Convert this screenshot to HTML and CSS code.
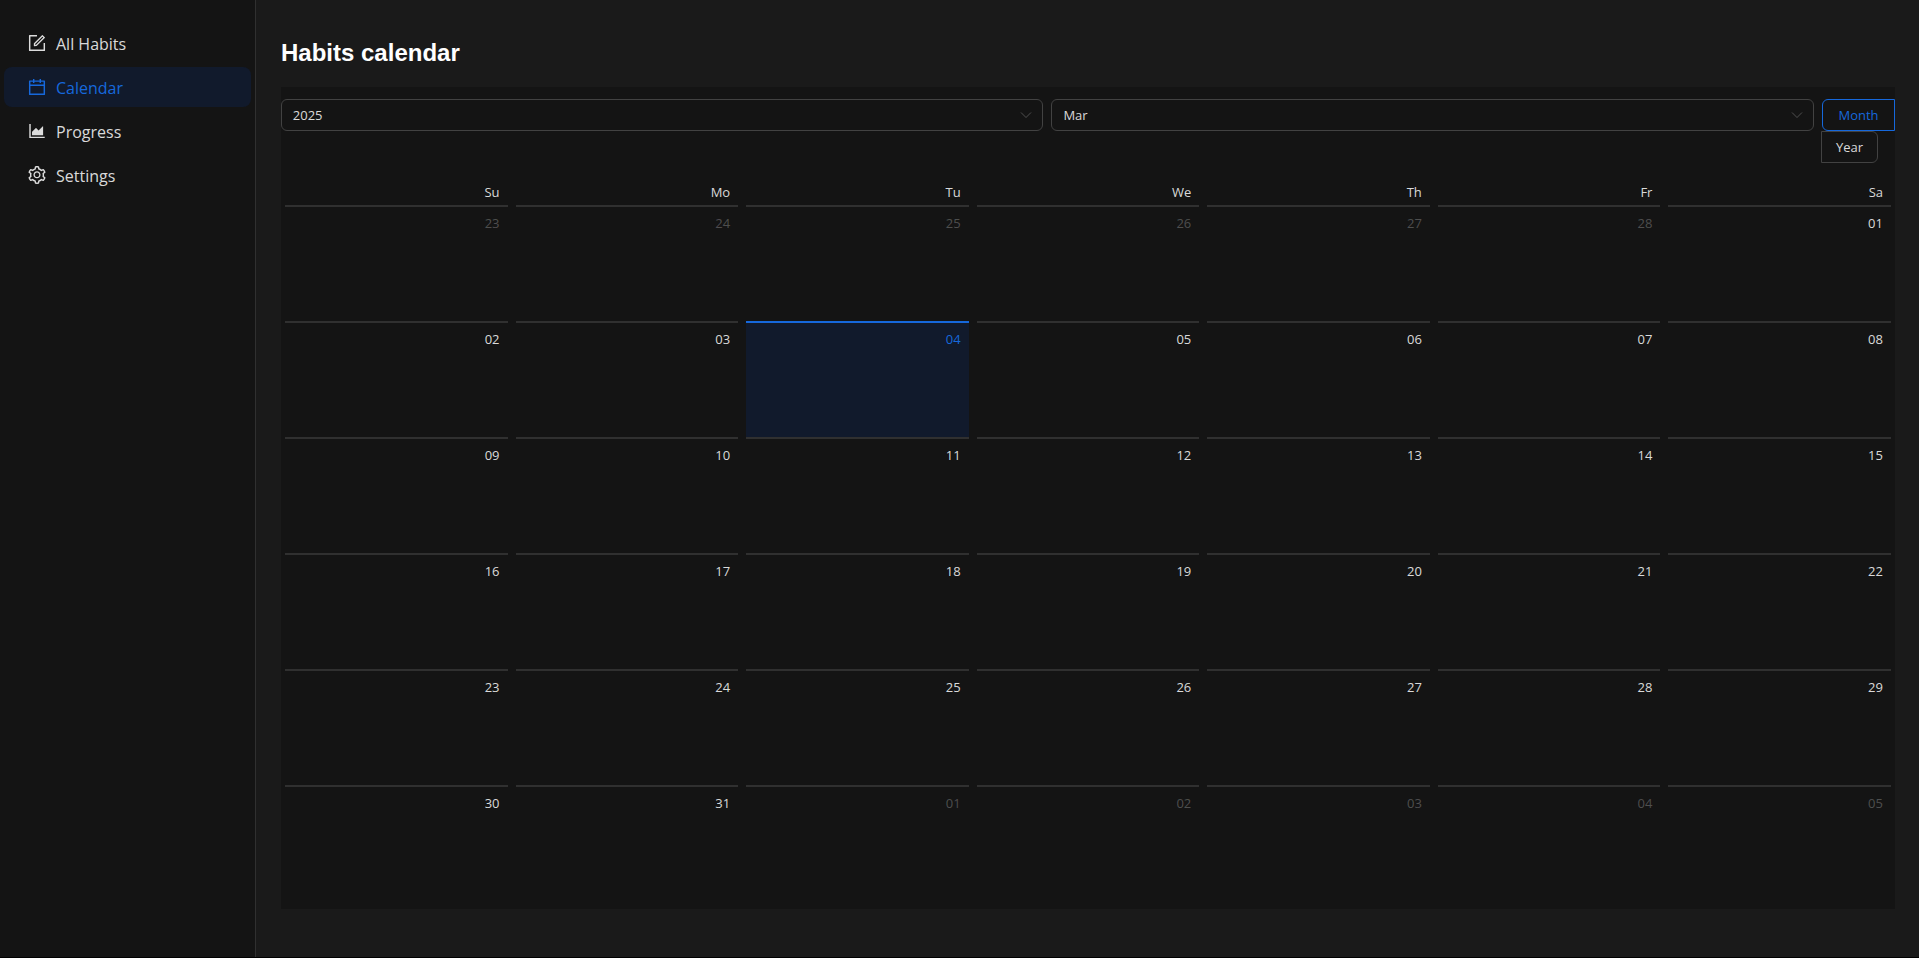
FILE: index.html
```html
<!DOCTYPE html>
<html lang="en">
<head>
<meta charset="utf-8">
<title>Habits calendar</title>
<link rel="stylesheet" href="styles.css">
</head>
<body>
<div class="app">
  <aside class="sidebar">
    <nav class="menu">
      <a class="menu-item"><svg class="menu-icon" viewBox="64 64 896 896" fill="currentColor"><path d="M904 512h-56c-4.400 0-8 3.600-8 8v320H184V184h320c4.400 0 8-3.600 8-8v-56c0-4.400-3.600-8-8-8H144c-17.700 0-32 14.300-32 32v736c0 17.700 14.300 32 32 32h736c17.700 0 32-14.300 32-32V520c0-4.400-3.600-8-8-8z"/><path d="M355.900 534.900L354 653.800c-.1 8.900 7.100 16.200 16 16.200h.4l118-2.900c2-.1 4-.9 5.400-2.300l415.900-415c3.100-3.100 3.100-8.200 0-11.300L785.400 114.300c-1.600-1.600-3.600-2.300-5.700-2.300s-4.100.8-5.700 2.300l-415.800 415a8.300 8.300 0 0 0-2.300 5.600zm63.500 23.600L779.700 199l45.200 45.100-360.500 359.700-45.700 1.100.7-46.400z"/></svg><span class="menu-label">All Habits</span></a>
      <a class="menu-item active"><svg class="menu-icon" viewBox="64 64 896 896" fill="currentColor"><path d="M880 184H712v-64c0-4.400-3.600-8-8-8h-56c-4.400 0-8 3.600-8 8v64H384v-64c0-4.400-3.600-8-8-8h-56c-4.400 0-8 3.600-8 8v64H144c-17.700 0-32 14.300-32 32v664c0 17.700 14.300 32 32 32h736c17.700 0 32-14.300 32-32V216c0-17.700-14.300-32-32-32zm-40 656H184V460h656v380zM184 392V256h128v48c0 4.400 3.600 8 8 8h56c4.400 0 8-3.600 8-8v-48h256v48c0 4.400 3.600 8 8 8h56c4.400 0 8-3.600 8-8v-48h128v136H184z"/></svg><span class="menu-label">Calendar</span></a>
      <a class="menu-item"><svg class="menu-icon" viewBox="64 64 896 896" fill="currentColor"><path d="M888 792H200V168c0-4.400-3.600-8-8-8h-56c-4.400 0-8 3.600-8 8v688c0 4.400 3.600 8 8 8h752c4.400 0 8-3.600 8-8v-56c0-4.400-3.600-8-8-8zm-616-64h536c4.400 0 8-3.600 8-8V284c0-7.200-8.700-10.700-13.700-5.700L592 488.600l-125.400-124a8.030 8.030 0 0 0-11.300 0l-189 189.600a7.870 7.870 0 0 0-2.300 5.600V720c0 4.400 3.600 8 8 8z"/></svg><span class="menu-label">Progress</span></a>
      <a class="menu-item"><svg class="menu-icon" viewBox="64 64 896 896" fill="currentColor"><path d="M924.800 625.700l-65.500-56c3.100-19 4.700-38.400 4.700-57.800s-1.600-38.800-4.700-57.800l65.500-56a32.030 32.030 0 0 0 9.300-35.200l-.9-2.600a443.740 443.740 0 0 0-79.700-137.900l-1.800-2.100a32.120 32.120 0 0 0-35.100-9.500l-81.300 28.900c-30-24.600-63.500-44-99.700-57.600l-15.700-85a32.050 32.050 0 0 0-25.800-25.700l-2.700-.5c-52.100-9.400-106.900-9.400-159 0l-2.700.5a32.050 32.050 0 0 0-25.800 25.700l-15.800 85.400a351.860 351.860 0 0 0-99 57.400l-81.900-29.100a32 32 0 0 0-35.100 9.500l-1.800 2.100a446.020 446.020 0 0 0-79.700 137.900l-.9 2.600c-4.500 12.500-.8 26.500 9.300 35.200l66.300 56.600c-3.100 18.800-4.600 38-4.600 57.100 0 19.200 1.500 38.400 4.600 57.100L99 625.500a32.030 32.030 0 0 0-9.300 35.200l.9 2.600c18.100 50.400 44.900 96.900 79.700 137.900l1.800 2.100a32.120 32.120 0 0 0 35.100 9.500l81.900-29.100c29.800 24.500 63.100 43.900 99 57.400l15.800 85.400a32.050 32.050 0 0 0 25.800 25.700l2.700.5a449.400 449.400 0 0 0 159 0l2.700-.5a32.050 32.050 0 0 0 25.800-25.700l15.700-85a350 350 0 0 0 99.700-57.600l81.300 28.900a32 32 0 0 0 35.100-9.500l1.800-2.100c34.800-41.100 61.600-87.500 79.700-137.900l.9-2.600c4.500-12.300.8-26.300-9.300-35zM788.300 465.900c2.500 15.100 3.800 30.600 3.800 46.100s-1.300 31-3.800 46.100l-6.600 40.100 74.700 63.900a370.030 370.030 0 0 1-42.600 73.600L721 702.800l-31.400 25.800c-23.900 19.600-50.500 35-79.300 45.800l-38.100 14.300-17.900 97a377.500 377.500 0 0 1-85 0l-17.900-97.200-37.800-14.500c-28.500-10.800-55-26.200-78.700-45.700l-31.400-25.900-93.400 33.200c-17-22.900-31.200-47.600-42.600-73.600l75.500-64.500-6.500-40c-2.400-14.900-3.700-30.300-3.700-45.500 0-15.300 1.200-30.600 3.700-45.500l6.500-40-75.500-64.500c11.300-26.100 25.600-50.700 42.600-73.600l93.400 33.200 31.400-25.900c23.700-19.500 50.200-34.900 78.700-45.700l37.900-14.300 17.900-97.200c28.100-3.200 56.800-3.200 85 0l17.900 97 38.100 14.300c28.700 10.800 55.400 26.200 79.300 45.800l31.400 25.800 92.800-32.900c17 22.900 31.200 47.600 42.600 73.600L781.800 426l6.500 39.900zM512 326c-97.200 0-176 78.800-176 176s78.800 176 176 176 176-78.800 176-176-78.800-176-176-176zm79.200 255.200A111.600 111.600 0 0 1 512 614c-29.900 0-58-11.700-79.200-32.800A111.600 111.600 0 0 1 400 502c0-29.900 11.700-58 32.800-79.200C454 401.600 482.100 390 512 390c29.900 0 58 11.600 79.200 32.800A111.600 111.600 0 0 1 624 502c0 29.900-11.700 58-32.800 79.200z"/></svg><span class="menu-label">Settings</span></a>
    </nav>
  </aside>
  <main class="main">
    <h1 class="title">Habits calendar</h1>
    <section class="panel">
      <div class="toolbar">
        <div class="select"><span>2025</span><svg class="chevron" viewBox="0 0 12 12" fill="none" stroke="currentColor" stroke-width="1"><path d="M1 3.500l5 5 5-5"/></svg></div>
        <div class="select"><span>Mar</span><svg class="chevron" viewBox="0 0 12 12" fill="none" stroke="currentColor" stroke-width="1"><path d="M1 3.500l5 5 5-5"/></svg></div>
        <div class="mode">
          <span class="mode-btn on">Month</span>
          <span class="mode-btn off">Year</span>
        </div>
      </div>
      <div class="grid">
        <div class="head">Su</div><div class="head">Mo</div><div class="head">Tu</div><div class="head">We</div><div class="head">Th</div><div class="head">Fr</div><div class="head">Sa</div>
        <div class="cell muted">23</div><div class="cell muted">24</div><div class="cell muted">25</div><div class="cell muted">26</div><div class="cell muted">27</div><div class="cell muted">28</div><div class="cell">01</div>
        <div class="cell">02</div><div class="cell">03</div><div class="cell today">04</div><div class="cell">05</div><div class="cell">06</div><div class="cell">07</div><div class="cell">08</div>
        <div class="cell">09</div><div class="cell">10</div><div class="cell">11</div><div class="cell">12</div><div class="cell">13</div><div class="cell">14</div><div class="cell">15</div>
        <div class="cell">16</div><div class="cell">17</div><div class="cell">18</div><div class="cell">19</div><div class="cell">20</div><div class="cell">21</div><div class="cell">22</div>
        <div class="cell">23</div><div class="cell">24</div><div class="cell">25</div><div class="cell">26</div><div class="cell">27</div><div class="cell">28</div><div class="cell">29</div>
        <div class="cell">30</div><div class="cell">31</div><div class="cell muted">01</div><div class="cell muted">02</div><div class="cell muted">03</div><div class="cell muted">04</div><div class="cell muted">05</div>
      </div>
    </section>
  </main>
</div>
</body>
</html>
```
FILE: styles.css
```css
* { box-sizing: border-box; }
html, body { margin: 0; height: 100%; background: #000; overflow: hidden; }
body { font-family: "Open Sans", "Noto Sans", sans-serif; font-size: 13px; color: rgba(255,255,255,.85); }
.app { display: flex; height: 957px; }
.sidebar { flex: 0 0 256px; background: #141414; border-right: 1px solid #303030; padding: 23px 4px 0; }
.menu { display: flex; flex-direction: column; gap: 4px; }
.menu-item { display: flex; align-items: center; gap: 10px; height: 40px; padding-left: 24px; border-radius: 8px; font-size: 16px; color: rgba(255,255,255,.85); }
.menu-item.active { background: #111a2c; color: #1668dc; }
.menu-icon { width: 18px; height: 18px; flex: none; }
.menu-label { padding-top: 1px; }
.main { flex: 1; min-width: 0; background: #1a1a1a; padding: 0 24px 0 25px; }
.title { margin: 0; padding-top: 39px; height: 87px; font: bold 24px/28px "Liberation Sans", Arial, sans-serif; color: #fff; }
.panel { background: #141414; height: 822px; }
.toolbar { display: flex; gap: 8px; margin-left: -.2px; padding: 12px 0; align-items: flex-start; }
.select { flex: 1; height: 32px; display: flex; align-items: center; justify-content: space-between; padding: 0 10px 0 11px; background: #141414; border: 1px solid #424242; border-radius: 6px; }
.chevron { width: 12px; height: 12px; color: rgba(255,255,255,.25); }
.mode { flex: 0 0 73px; display: flex; flex-wrap: wrap; height: 64px; }
.mode-btn { height: 32px; display: flex; align-items: center; justify-content: center; border: 1px solid #424242; }
.mode-btn.on { width: 73px; color: #1668dc; border-color: #1668dc; border-radius: 6px 0 0 6px; }
.mode-btn.off { width: 57px; margin-left: -1px; border-radius: 0 6px 6px 0; }
.grid { display: grid; grid-template-columns: repeat(7, 1fr); margin-top: 8px; }
.head { height: 22px; padding: 0 12px 5px 0; line-height: 19px; text-align: right; }
.cell { height: 116px; margin: 0 4px; padding: 5px 8px 0; border-top: 2px solid #303030; line-height: 22px; text-align: right; }
.cell.muted { color: rgba(255,255,255,.25); }
.cell.today { background: #111a2c; border-top-color: #1668dc; color: #1668dc; }
```
